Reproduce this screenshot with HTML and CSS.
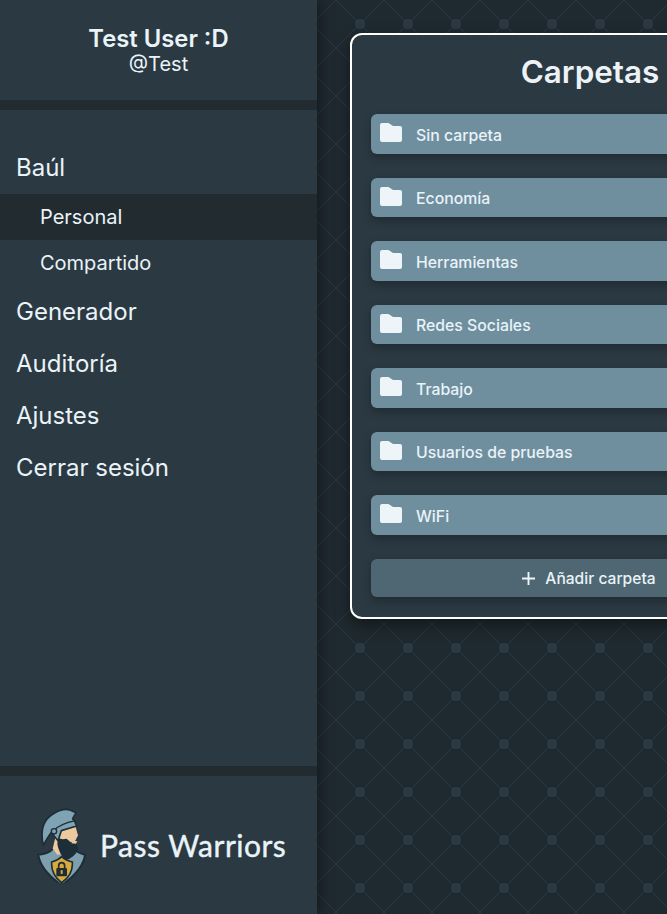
FILE: index.html
```html
<!DOCTYPE html>
<html>
<head>
    <title>Pass Warriors</title>
    <link rel="stylesheet" href="styles.css">
</head>
<body>
    <aside class="sidebar">
        <div class="user">
            <div class="user-name">Test User :D</div>
            <div class="user-tag">@Test</div>
        </div>
        <nav class="nav">
            <a class="nav-item">Baúl</a>
            <a class="nav-sub active">Personal</a>
            <a class="nav-sub">Compartido</a>
            <a class="nav-item">Generador</a>
            <a class="nav-item">Auditoría</a>
            <a class="nav-item">Ajustes</a>
            <a class="nav-item">Cerrar sesión</a>
        </nav>
        <div class="brand">
            <svg class="brand-logo" width="52" height="75" viewBox="48 30 156 225">
                <path d="M55 170Q85 168 100 152L160 152Q172 165 195 170Q190 215 125 262Q60 215 55 170Z" fill="#7e9fae" stroke="#1d2e39" stroke-width="6" stroke-linejoin="round"/>
                <path d="M98 152L108 110L120 90L166 84L174 112L166 128L130 168L112 170Z" fill="#ecc9a0"/>
                <path d="M114 120L112 138Q116 165 136 186Q164 180 175 152L168 128L152 133L140 122L128 124Z" fill="#1d2e39"/>
                <path d="M158 128L172 130L168 137L154 136Z" fill="#ecc9a0"/>
                <path d="M70 142Q54 72 103 46Q128 30 150 36L168 44L158 62Q166 70 170 84L124 98L114 128Q100 112 95 102Q84 116 70 142Z" fill="#7fa3b2" stroke="#1d2e39" stroke-width="5" stroke-linejoin="round"/>
                <path d="M104 96Q120 78 166 68" fill="none" stroke="#1d2e39" stroke-width="4"/>
                <circle cx="102" cy="100" r="8" fill="#7fa3b2" stroke="#1d2e39" stroke-width="4"/>
                <path d="M95 192Q114 187 125 176Q136 187 157 192Q160 230 125 254Q92 230 95 192Z" fill="#d9a93a" stroke="#1d2e39" stroke-width="5"/>
                <path d="M116 212V204Q116 194 125 194Q134 194 134 204V212" fill="none" stroke="#1d2e39" stroke-width="5"/>
                <rect x="109" y="210" width="32" height="25" rx="3" fill="#1d2e39"/>
                <rect x="122" y="216" width="6" height="12" rx="2" fill="#d9a93a"/>
            </svg>
            <span class="brand-name">Pass Warriors</span>
        </div>
    </aside>
    <main class="content">
        <section class="card">
            <h1 class="card-title">Carpetas</h1>
            <div class="folder-list">
                <a class="folder"><svg class="folder-icon" width="22" height="19" viewBox="0 0 22 19"><path d="M2 0H8Q9 0 10 1L13 3H20Q22 3 22 5V17Q22 19 20 19H2Q0 19 0 17V2Q0 0 2 0Z"/></svg>Sin carpeta</a>
                <a class="folder"><svg class="folder-icon" width="22" height="19" viewBox="0 0 22 19"><path d="M2 0H8Q9 0 10 1L13 3H20Q22 3 22 5V17Q22 19 20 19H2Q0 19 0 17V2Q0 0 2 0Z"/></svg>Economía</a>
                <a class="folder"><svg class="folder-icon" width="22" height="19" viewBox="0 0 22 19"><path d="M2 0H8Q9 0 10 1L13 3H20Q22 3 22 5V17Q22 19 20 19H2Q0 19 0 17V2Q0 0 2 0Z"/></svg>Herramientas</a>
                <a class="folder"><svg class="folder-icon" width="22" height="19" viewBox="0 0 22 19"><path d="M2 0H8Q9 0 10 1L13 3H20Q22 3 22 5V17Q22 19 20 19H2Q0 19 0 17V2Q0 0 2 0Z"/></svg>Redes Sociales</a>
                <a class="folder"><svg class="folder-icon" width="22" height="19" viewBox="0 0 22 19"><path d="M2 0H8Q9 0 10 1L13 3H20Q22 3 22 5V17Q22 19 20 19H2Q0 19 0 17V2Q0 0 2 0Z"/></svg>Trabajo</a>
                <a class="folder"><svg class="folder-icon" width="22" height="19" viewBox="0 0 22 19"><path d="M2 0H8Q9 0 10 1L13 3H20Q22 3 22 5V17Q22 19 20 19H2Q0 19 0 17V2Q0 0 2 0Z"/></svg>Usuarios de pruebas</a>
                <a class="folder"><svg class="folder-icon" width="22" height="19" viewBox="0 0 22 19"><path d="M2 0H8Q9 0 10 1L13 3H20Q22 3 22 5V17Q22 19 20 19H2Q0 19 0 17V2Q0 0 2 0Z"/></svg>WiFi</a>
                <a class="folder-add"><svg width="15" height="15" viewBox="0 0 15 15"><path d="M7.5 1V14M1 7.5H14" stroke="#edf5f9" stroke-width="1.9" fill="none"/></svg>Añadir carpeta</a>
            </div>
        </section>
    </main>
</body>
</html>
```

FILE: styles.css
```css
body {
    display: flex;
    height: 100vh;
    margin: 0;
    overflow: hidden;
    font-family: Inter, sans-serif;
    color: #e9f3f8;
    background-color: #1f2a30;
    background-image:
        radial-gradient(circle at center, #2b3942 5px, transparent 5.5px),
        linear-gradient(45deg, transparent calc(50% - 0.5px), #2b3842 50%, transparent calc(50% + 0.5px)),
        linear-gradient(-45deg, transparent calc(50% - 0.5px), #2b3842 50%, transparent calc(50% + 0.5px));
    background-size: 48px 48px;
}

.sidebar {
    display: flex;
    flex-direction: column;
    flex: none;
    width: 317px;
    background-color: #2b3942;
    box-shadow: 4px 0 12px rgba(0, 0, 0, 0.35);
    z-index: 1;
}

.user {
    display: flex;
    flex-direction: column;
    align-items: center;
    height: 100px;
    padding-top: 25px;
    box-sizing: border-box;
}

.user-name {
    font-size: 23.8px;
    font-weight: 600;
    line-height: 28px;
}

.user-tag {
    font-size: 20px;
    line-height: 22px;
}

.nav {
    display: flex;
    flex-direction: column;
    flex: 1;
    padding-top: 32px;
    border-top: 10px solid #212b30;
    border-bottom: 10px solid #212b30;
}

.nav-item {
    height: 52px;
    line-height: 52px;
    padding-left: 16px;
    font-size: 24px;
}

.nav-sub {
    height: 46px;
    line-height: 46px;
    padding-left: 40px;
    font-size: 20px;
}

.nav-sub.active {
    background-color: #212b30;
}

.brand {
    display: flex;
    align-items: center;
    gap: 12px;
    height: 138px;
    padding-left: 36px;
}

.brand-name {
    font-family: Lato, sans-serif;
    font-size: 30px;
    letter-spacing: 0.5px;
    -webkit-text-stroke: 0.4px #e9f3f8;
}

.content {
    flex: none;
    padding: 33px;
}

.card {
    box-sizing: border-box;
    width: 480px;
    height: 586px;
    padding: 0 19px;
    border: 2px solid #ffffff;
    border-radius: 12px;
    background-color: #2b3942;
    box-shadow: 0 6px 16px rgba(0, 0, 0, 0.45);
}

.card-title {
    margin: 0;
    height: 79px;
    line-height: 75px;
    font-size: 31.4px;
    font-weight: 600;
    text-align: center;
    color: #edf2f6;
}

.folder-list {
    display: flex;
    flex-direction: column;
    gap: 24px;
}

.folder,
.folder-add {
    display: flex;
    align-items: center;
    height: 39.5px;
    padding-top: 3px;
    box-sizing: border-box;
    border-radius: 6px;
    font-size: 15.8px;
    font-weight: 500;
    box-shadow: 0 4px 8px rgba(0, 0, 0, 0.25);
}

.folder {
    padding-left: 9px;
    background-color: #6f8f9f;
}

.folder-icon {
    margin-right: 14px;
    margin-top: -5px;
    fill: #edf5f9;
}

.folder-add {
    justify-content: center;
    gap: 9px;
    height: 38.5px;
    padding-top: 1px;
    padding-right: 3px;
    font-size: 15.6px;
    background-color: #4f6772;
}
```
